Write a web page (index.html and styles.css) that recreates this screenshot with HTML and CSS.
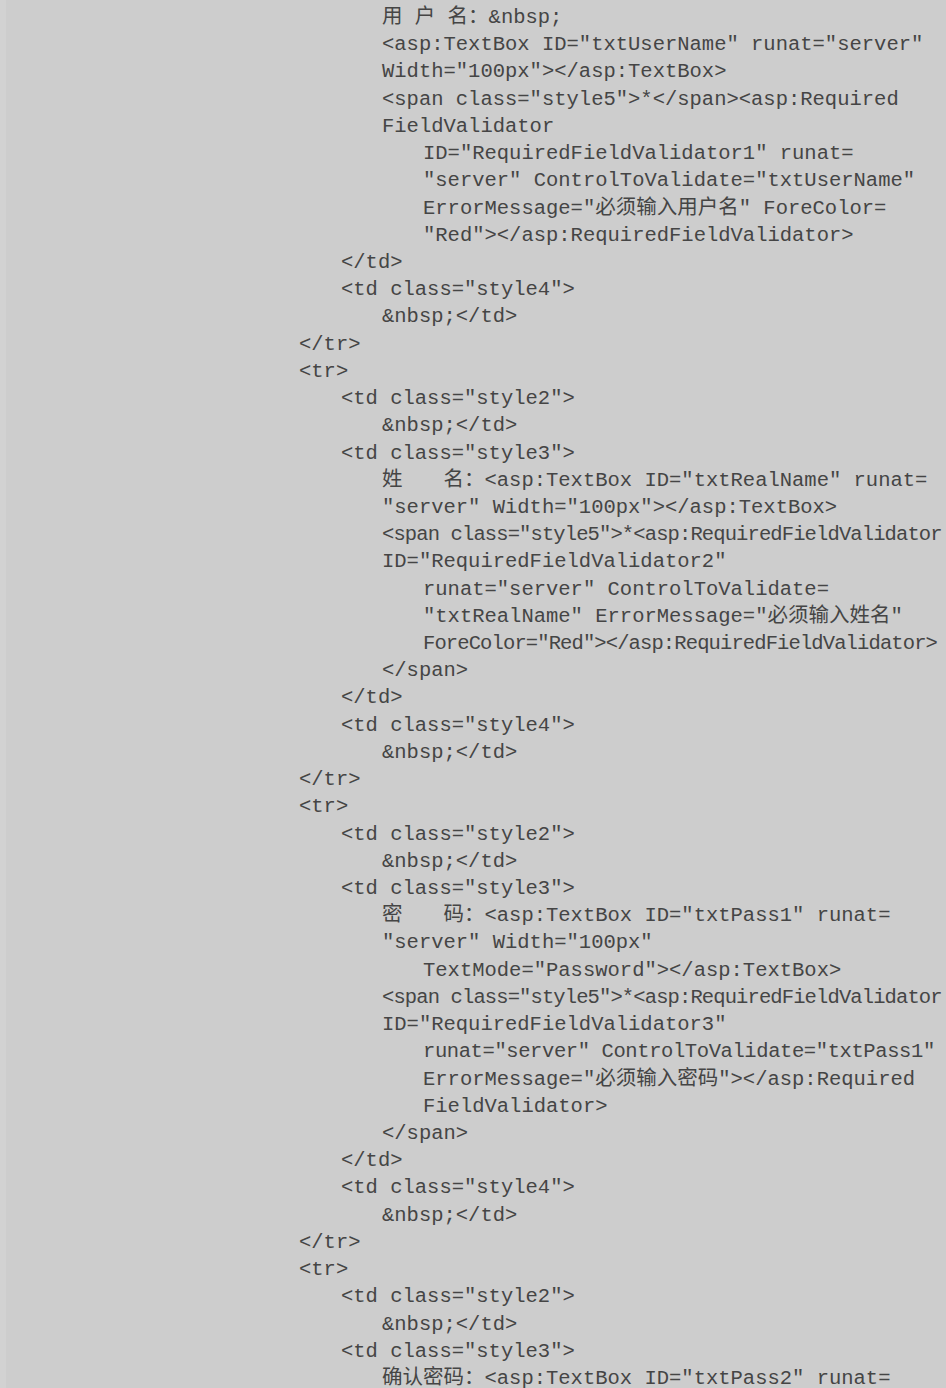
FILE: index.html
```html
<!DOCTYPE html>
<html lang="zh-CN">
<head>
    <meta charset="UTF-8">
    <meta name="viewport" content="width=device-width, initial-scale=1.0">
    <title>注册页面代码</title>
    <link rel="stylesheet" href="styles.css">
</head>
<body>
    <div class="page">
        <div class="code">
            <!-- 用户名 -->
            <div class="line i2">用 户 名：&amp;nbsp;</div>
            <div class="line i2">&lt;asp:TextBox ID="txtUserName" runat="server"</div>
            <div class="line i2">Width="100px"&gt;&lt;/asp:TextBox&gt;</div>
            <div class="line i2">&lt;span class="style5"&gt;*&lt;/span&gt;&lt;asp:Required</div>
            <div class="line i2">FieldValidator</div>
            <div class="line i3">ID="RequiredFieldValidator1" runat=</div>
            <div class="line i3">"server" ControlToValidate="txtUserName"</div>
            <div class="line i3">ErrorMessage="必须输入用户名" ForeColor=</div>
            <div class="line i3">"Red"&gt;&lt;/asp:RequiredFieldValidator&gt;</div>
            <div class="line i1">&lt;/td&gt;</div>
            <div class="line i1">&lt;td class="style4"&gt;</div>
            <div class="line i2">&amp;nbsp;&lt;/td&gt;</div>
            <div class="line i0">&lt;/tr&gt;</div>

            <!-- 姓名 -->
            <div class="line i0">&lt;tr&gt;</div>
            <div class="line i1">&lt;td class="style2"&gt;</div>
            <div class="line i2">&amp;nbsp;&lt;/td&gt;</div>
            <div class="line i1">&lt;td class="style3"&gt;</div>
            <div class="line i2">姓　　名：&lt;asp:TextBox ID="txtRealName" runat=</div>
            <div class="line i2">"server" Width="100px"&gt;&lt;/asp:TextBox&gt;</div>
            <div class="line i2 tight">&lt;span class="style5"&gt;*&lt;asp:RequiredFieldValidator</div>
            <div class="line i2">ID="RequiredFieldValidator2"</div>
            <div class="line i3">runat="server" ControlToValidate=</div>
            <div class="line i3">"txtRealName" ErrorMessage="必须输入姓名"</div>
            <div class="line i3 tight">ForeColor="Red"&gt;&lt;/asp:RequiredFieldValidator&gt;</div>
            <div class="line i2">&lt;/span&gt;</div>
            <div class="line i1">&lt;/td&gt;</div>
            <div class="line i1">&lt;td class="style4"&gt;</div>
            <div class="line i2">&amp;nbsp;&lt;/td&gt;</div>
            <div class="line i0">&lt;/tr&gt;</div>

            <!-- 密码 -->
            <div class="line i0">&lt;tr&gt;</div>
            <div class="line i1">&lt;td class="style2"&gt;</div>
            <div class="line i2">&amp;nbsp;&lt;/td&gt;</div>
            <div class="line i1">&lt;td class="style3"&gt;</div>
            <div class="line i2">密　　码：&lt;asp:TextBox ID="txtPass1" runat=</div>
            <div class="line i2">"server" Width="100px"</div>
            <div class="line i3">TextMode="Password"&gt;&lt;/asp:TextBox&gt;</div>
            <div class="line i2 tight">&lt;span class="style5"&gt;*&lt;asp:RequiredFieldValidator</div>
            <div class="line i2">ID="RequiredFieldValidator3"</div>
            <div class="line i3 snug">runat="server" ControlToValidate="txtPass1"</div>
            <div class="line i3">ErrorMessage="必须输入密码"&gt;&lt;/asp:Required</div>
            <div class="line i3">FieldValidator&gt;</div>
            <div class="line i2">&lt;/span&gt;</div>
            <div class="line i1">&lt;/td&gt;</div>
            <div class="line i1">&lt;td class="style4"&gt;</div>
            <div class="line i2">&amp;nbsp;&lt;/td&gt;</div>
            <div class="line i0">&lt;/tr&gt;</div>

            <!-- 确认密码 -->
            <div class="line i0">&lt;tr&gt;</div>
            <div class="line i1">&lt;td class="style2"&gt;</div>
            <div class="line i2">&amp;nbsp;&lt;/td&gt;</div>
            <div class="line i1">&lt;td class="style3"&gt;</div>
            <div class="line i2">确认密码：&lt;asp:TextBox ID="txtPass2" runat=</div>
        </div>
    </div>
</body>
</html>
```

FILE: styles.css
```css
html, body {
    margin: 0;
    padding: 0;
    background-color: #cdcdcd;
}
body {
    font-family: "Liberation Mono", "Noto Sans CJK SC", monospace;
    color: #454545;
    height: 1388px;
    overflow: hidden;
}
.page {
    position: relative;
    height: 100%;
    border-left: 6px solid #d2d2d2;
    box-sizing: border-box;
}
.code {
    padding-top: 4px;
    padding-left: 293px;
    font-size: 20.5px;
    line-height: 27.22px;
}
.line {
    white-space: pre;
}
.i0 {
    padding-left: 0;
}
.i1 {
    padding-left: 42px;
}
.i2 {
    padding-left: 83px;
}
.i3 {
    padding-left: 124px;
}
.tight {
    letter-spacing: -0.88px;
}
.snug {
    letter-spacing: -0.4px;
}
```
